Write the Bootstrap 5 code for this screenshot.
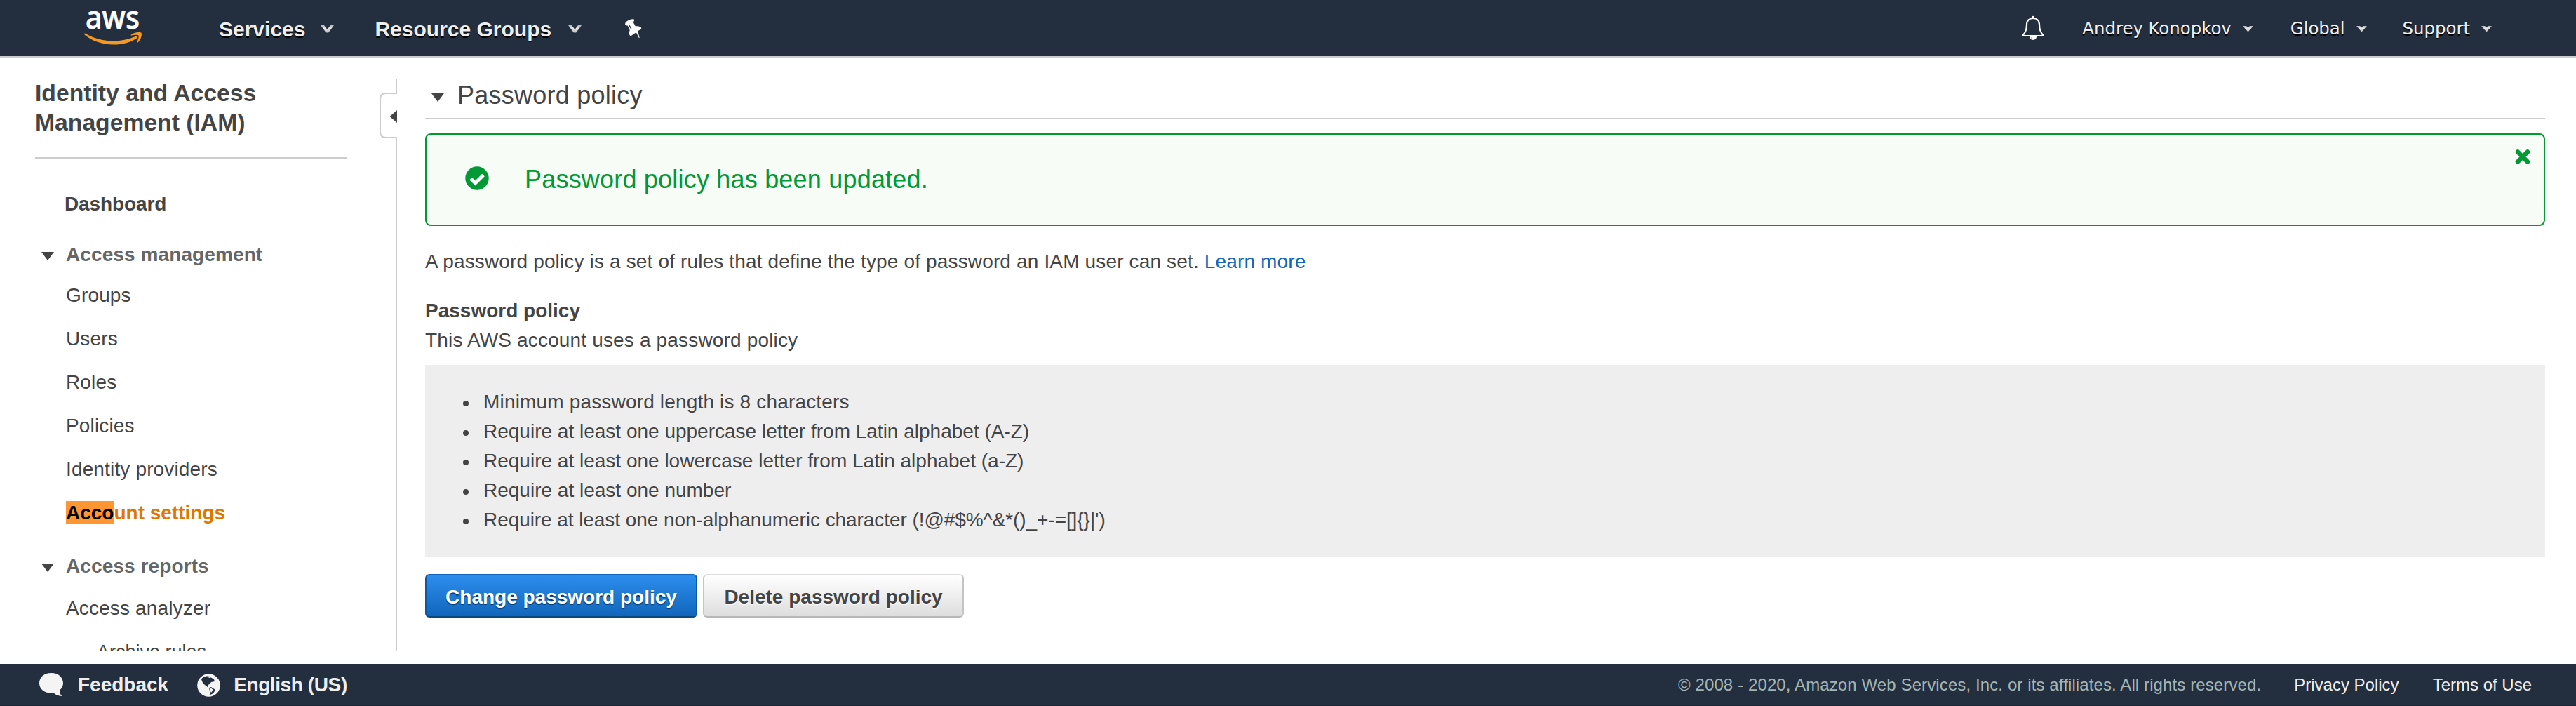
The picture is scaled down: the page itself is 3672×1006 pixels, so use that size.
<!DOCTYPE html>
<html lang="en">
<head>
<meta charset="utf-8">
<title>IAM Management Console</title>
<link href="https://cdn.jsdelivr.net/npm/bootstrap@5.3.0/dist/css/bootstrap.min.css" rel="stylesheet">
<style>
body{font-family:"Liberation Sans",Arial,sans-serif;font-size:28px;line-height:42px;color:#444;background:#fff;height:1006px;overflow:hidden}
a{text-decoration:none;color:inherit}
svg{display:block;flex:none}
.topbar{height:82px;background:#232f3e;border-bottom:2px solid #ccc;padding:0 120px 0 118px;color:#eee;flex:none}
.topbar a{text-shadow:0 2px 0 #000}
.main-menu a{font-size:30px;font-weight:700;padding-top:3px}
.user-menu a{font-family:"DejaVu Sans",Verdana,sans-serif;font-size:24.4px;padding-top:2px}
.logo{margin-right:110px;overflow:visible}
.services{margin-right:58px}
.groups{margin-right:61px}
.services svg{margin-left:22px}
.groups svg{margin-left:24px}
.account{margin-left:53px;margin-right:53px}
.region{margin-right:51px}
.user-menu a svg{margin-left:16px}
.workspace{height:864px}
.sidenav{width:541px;height:846px;padding:29px 47px 0 50px;overflow:hidden}
.sidenav h1{font-size:33.7px;line-height:42px;font-weight:700;margin:0 0 29px;height:84px;color:#444}
.rule{height:2px;background:#ccc;margin-bottom:44px}
.dash{padding-left:42px;letter-spacing:-.1px;margin-bottom:30px}
.section-head{color:#666;padding-left:9px;letter-spacing:.1px}
.section-head svg{margin:4px 17px 0 0}
.reports{margin-top:14px;margin-bottom:18px}
.sublist{padding-left:44px}
.sublist a{display:block;height:62px;letter-spacing:.15px}
.sublist a.current{color:#e07700;font-weight:700;letter-spacing:0}
.hit{background:#ff9632;color:#000;padding:1px 0 1px}
.sublist a.nested{padding-left:44px;font-size:27px;letter-spacing:0}
.rail{width:25px;height:816px;margin-top:30px}
.rail-line{width:2px;background:#ccc}
.rail-start{height:20px}
.rail-tab{height:65px}
.content-pane{padding:30px 44px 0 40px}
.pane-title{height:58px;border-bottom:2px solid #ccc;padding-left:9px;margin-bottom:20px}
.pane-title h2{font-size:36px;line-height:48px;margin:0 0 0 19px;font-weight:400;letter-spacing:.25px}
.pane-title svg{margin-top:21px}
.notice{height:132px;border:2px solid #093;border-radius:8px;background:#f7fcf7;color:#093;padding:0 19px 0 55px;margin-bottom:30px}
.notice span{font-size:36px;line-height:48px;letter-spacing:.2px;margin-left:51px}
.notice .tick{margin-bottom:5px}
.notice .close-x{margin-top:21px}
.intro{margin-bottom:28px;letter-spacing:.15px}
.intro a{color:#1166bb}
.policy-name{font-weight:700}
.policy-note{letter-spacing:.16px;margin-bottom:14px}
.rules{background:#eee;height:274px;padding:32px 0 0 54px;margin-bottom:24px}
.rules li{height:42px;display:flex;align-items:center}
.rules li:first-child{letter-spacing:.17px}
.rules li:last-child{letter-spacing:-.07px}
.rules li::before{content:"";width:8px;height:8px;border-radius:50%;background:#444;margin:4px 21px 0 0}
.btn-console{height:62px;font-size:28px;font-weight:700;line-height:42px;padding:4px 0 0;border-radius:6px;border-width:2px;display:block}
.btn-change{width:388px;color:#fff;background:linear-gradient(#2d8ded,#1166bb);border-color:#1166bb #0d58a3 #0a467f;text-shadow:0 2px 1px #0a3a6b}
.btn-delete{width:372px;color:#444;background:linear-gradient(#fff,#ddd);border-color:#ddd #c4c4c4 #b8b8b8;text-shadow:0 2px 1px #fff}
.footbar{height:60px;background:#232f3e;border-bottom:2px solid #1c2633;padding:2px 63px 0 55px;color:#eee}
.feedback{margin:0 41px 0 20px}
.lang{margin-left:19px;letter-spacing:-.4px}
.legal{font-size:24px}
.legal span{color:#a3b5b5;letter-spacing:.11px;margin-right:47px}
</style>
</head>
<body class="d-flex flex-column">
<svg width="0" height="0" class="position-absolute">
  <defs>
    <linearGradient id="fade" x1="0" y1="0" x2="0" y2="1"><stop offset="0" stop-color="#b4b4b4"/><stop offset=".4" stop-color="#e6e6e6"/><stop offset="1" stop-color="#bbb"/></linearGradient>
    <symbol id="chev" viewBox="0 0 19 11"><path d="M0 0H5L9.500 6L14 0H19L11.200 10.500H7.800Z" fill="url(#fade)"/></symbol>
    <symbol id="drop" viewBox="0 0 15 9"><path d="M0 0H5L7.500 2.200L10 0H15L7.500 8.500Z" fill="url(#fade)"/></symbol>
    <symbol id="tri" viewBox="0 0 18 12"><path d="M0 0H18L9 12Z" fill="#444"/></symbol>
  </defs>
</svg>
<nav class="topbar d-flex align-items-center justify-content-between">
  <div class="main-menu d-flex align-items-center">
    <svg class="logo" width="84" height="80" viewBox="118 0 84 80">
      <text x="122" y="40.500" font-family="Noto Sans, Open Sans, sans-serif" font-size="45" font-weight="500" fill="#fff" stroke="#fff" stroke-width=".7" textLength="77" lengthAdjust="spacingAndGlyphs">aws</text>
      <path d="M120 48.500C120.300 47 121.300 47.400 123 48.500C145 61 172 61 193 52C195.500 51 197 53 195 54.500C176 67.500 141 67 120.500 49.500Z" fill="#f7981f"/>
      <path d="M186.500 50C190 46.500 200 45 201.600 47C203 50 200 58 196.200 60.800C195.500 61.200 195 60.800 195.300 60C197 56 198.300 51.800 197.400 50.600C196.200 49.200 191 50 187.300 50.600C186.500 50.700 186 50.400 186.500 50Z" fill="#f7981f"/>
    </svg>
    <a href="#" class="services d-flex align-items-center">Services<svg width="19" height="11"><use href="#chev"/></svg></a>
    <a href="#" class="groups d-flex align-items-center">Resource Groups<svg width="19" height="11"><use href="#chev"/></svg></a>
    <svg width="25" height="29" viewBox="88 47 72 86">
      <path d="M91 67C97 57 113 51 125 50C131 53 129 61 124 63L134 81C146 78 158 83 159 89C157 94 151 97 144 101L151 129L149 131L137 107C129 111 121 118 114 122C107 119 105 108 110 98L101 78C93 80 88 75 91 67Z" fill="#fff"/>
      <path d="M106 74L117 94" stroke="#232f3e" stroke-width="4" fill="none"/>
    </svg>
  </div>
  <div class="user-menu d-flex align-items-center">
    <svg width="34" height="36" viewBox="0 0 34 36">
      <path d="M2 29C6 25 8 20 8 13C8 7 12 4 17 4C22 4 26 7 26 13C26 20 28 25 32 29Z" fill="none" stroke="#fff" stroke-width="2.200" stroke-linejoin="round"/>
      <circle cx="17" cy="3" r="2.200" fill="#fff"/><path d="M12 30H22C22 36.500 12 36.500 12 30Z" fill="#fff"/><path d="M14.500 31.500Q15 33.500 17 33.500" stroke="#7b838c" fill="none"/>
    </svg>
    <a href="#" class="account d-flex align-items-center">Andrey Konopkov<svg width="15" height="9"><use href="#drop"/></svg></a>
    <a href="#" class="region d-flex align-items-center">Global<svg width="15" height="9"><use href="#drop"/></svg></a>
    <a href="#" class="help d-flex align-items-center">Support<svg width="15" height="9"><use href="#drop"/></svg></a>
  </div>
</nav>
<div class="workspace d-flex">
  <aside class="sidenav flex-shrink-0">
    <h1>Identity and Access<br>Management (IAM)</h1>
    <div class="rule"></div>
    <a href="#" class="dash d-block fw-bold">Dashboard</a>
    <div class="section-head d-flex align-items-center fw-bold mb-3"><svg width="18" height="12"><use href="#tri"/></svg>Access management</div>
    <div class="sublist">
      <a href="#">Groups</a>
      <a href="#">Users</a>
      <a href="#">Roles</a>
      <a href="#">Policies</a>
      <a href="#">Identity providers</a>
      <a href="#" class="current"><span class="hit">Acco</span>unt settings</a>
    </div>
    <div class="section-head reports d-flex align-items-center fw-bold"><svg width="18" height="12"><use href="#tri"/></svg>Access reports</div>
    <div class="sublist">
      <a href="#">Access analyzer</a>
      <a href="#" class="nested">Archive rules</a>
    </div>
  </aside>
  <div class="rail d-flex flex-column align-items-end flex-shrink-0">
    <div class="rail-line rail-start"></div>
    <svg class="rail-tab" width="25" height="65" viewBox="0 0 25 65"><path d="M24 0V1H9Q1 1 1 9V56Q1 64 9 64H24V65" fill="none" stroke="#ccc" stroke-width="2"/><path d="M25 25V43L14.500 34Z" fill="#444"/></svg>
    <div class="rail-line flex-grow-1"></div>
  </div>
  <main class="content-pane flex-grow-1">
    <div class="pane-title d-flex align-items-start"><svg width="18" height="12"><use href="#tri"/></svg><h2>Password policy</h2></div>
    <div class="notice d-flex align-items-center">
      <svg class="tick" width="34" height="34" viewBox="0 0 34 34"><circle cx="17" cy="17" r="16.700" fill="#093"/><path d="M8 17.500L14.500 24L26 12.500" fill="none" stroke="#fff" stroke-width="5"/></svg>
      <span>Password policy has been updated.</span>
      <svg class="close-x ms-auto align-self-start" width="22" height="21" viewBox="0 0 22 21"><path d="M4 3.500L18 17.500M18 3.500L4 17.500" stroke="#093" stroke-width="6.500" stroke-linecap="round"/></svg>
    </div>
    <p class="intro">A password policy is a set of rules that define the type of password an IAM user can set. <a href="#">Learn more</a></p>
    <div class="policy-name">Password policy</div>
    <p class="policy-note">This AWS account uses a password policy</p>
    <ul class="rules list-unstyled">
      <li>Minimum password length is 8 characters</li>
      <li>Require at least one uppercase letter from Latin alphabet (A-Z)</li>
      <li>Require at least one lowercase letter from Latin alphabet (a-Z)</li>
      <li>Require at least one number</li>
      <li>Require at least one non-alphanumeric character (!@#$%^&amp;*()_+-=[]{}|')</li>
    </ul>
    <div class="d-flex gap-2">
      <button class="btn btn-console btn-change">Change password policy</button>
      <button class="btn btn-console btn-delete">Delete password policy</button>
    </div>
  </main>
</div>
<footer class="footbar d-flex align-items-center justify-content-between">
  <div class="d-flex align-items-center fw-bold">
    <svg width="36" height="34" viewBox="0 0 36 34"><path d="M18 0C28 0 35 6 35 14.500C35 19 33 22 30 24.500C30 28 31 31 33.500 33C28 32.500 24 31 21.500 28.500C9 30 1 23 1 14.500C1 6 8 0 18 0Z" fill="#f4f4f4"/></svg>
    <a href="#" class="feedback">Feedback</a>
    <svg width="33" height="33" viewBox="0 0 33 33"><circle cx="16.500" cy="16.500" r="16.300" fill="#f4f4f4"/><path d="M6 8C9 3 15 3 18 4L16 6L20 5.500L24 8L25 11L20 12L18 15L15 16L16 20L11 16L8 13Z" fill="#232f3e"/><path d="M17 20L20 19L26 23L23 28L19 30Z" fill="#232f3e"/><path d="M19 20L23 23L20 27L18 23Z" fill="#f4f4f4"/></svg>
    <a href="#" class="lang">English (US)</a>
  </div>
  <div class="legal d-flex">
    <span>© 2008 - 2020, Amazon Web Services, Inc. or its affiliates. All rights reserved.</span>
    <a href="#" class="me-5">Privacy Policy</a>
    <a href="#">Terms of Use</a>
  </div>
</footer>
<script src="https://cdn.jsdelivr.net/npm/bootstrap@5.3.0/dist/js/bootstrap.bundle.min.js"></script>
</body>
</html>
